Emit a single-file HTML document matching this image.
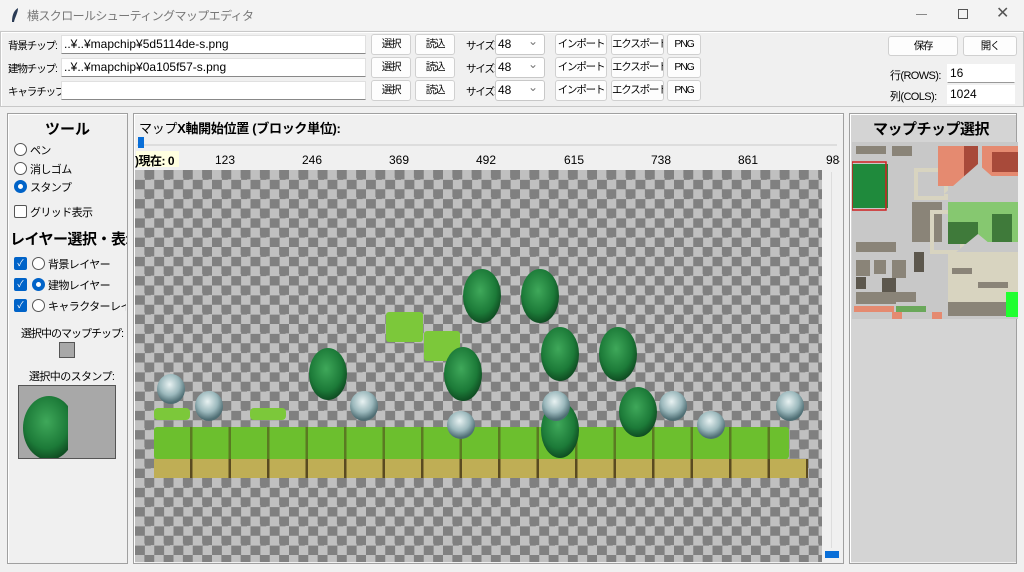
<!DOCTYPE html>
<html><head><meta charset="utf-8"><style>
*{box-sizing:border-box;margin:0;padding:0}
body{width:1024px;height:572px;background:#f0f0f0;font-family:"Liberation Sans","Noto Sans CJK JP",sans-serif;font-size:12px;color:#000;position:relative;overflow:hidden}
.a{position:absolute;white-space:nowrap}
.j{font-size:11px;letter-spacing:-0.6px}
.l{font-size:10.5px;letter-spacing:-1.1px}
.btn{position:absolute;background:#fdfdfd;border:1px solid #d0d0d0;border-radius:3px;text-align:center;font-size:10.5px;line-height:19px;height:21px;white-space:nowrap;overflow:hidden;letter-spacing:-1.2px}
.inp{position:absolute;background:#fff;border:1px solid #e0e0e0;border-bottom:1px solid #888;height:19px;font-size:12px;line-height:17px;padding-left:2px;white-space:nowrap}
.sel{position:absolute;background:#fff;border:1px solid #c8c8c8;border-radius:3px;height:21px;font-size:12px;line-height:19px;padding-left:2px}
.sel:after{content:"⌄";position:absolute;right:6px;top:-3px;color:#777;font-size:12px}
.panel{position:absolute;border:1px solid #a0a0a0;box-shadow:inset 1px 1px 0 #fff}
.rad{position:absolute;width:13px;height:13px;border:1px solid #555;border-radius:50%;background:#fff}
.rad.on{border:4px solid #0063c8}
.chk{position:absolute;width:13px;height:13px;border-radius:2px;background:#0063c8;color:#fff;font-size:9px;line-height:13px;text-align:center}
</style></head><body>
<div class="a" style="left:0;top:0;width:1024px;height:30px;background:#f3f3f3"></div>
<svg class="a" style="left:10px;top:7px" width="10" height="16"><path d="M8 1 C3 4 2 10 2 15 L4 15 C5 10 8 6 8 1Z" fill="#2a3b55"/></svg>
<div class="a j" style="left:27px;top:7px;color:#777;font-size:12px">横スクロールシューティングマップエディタ</div>
<div class="a" style="left:916px;top:14px;width:11px;height:1px;background:#888"></div>
<div class="a" style="left:958px;top:9px;width:10px;height:10px;border:1px solid #555"></div>
<div class="a" style="left:996px;top:3px;color:#555;font-size:16px">✕</div>
<div class="panel" style="left:0;top:31px;width:1024px;height:76px;border-color:#c8c8c8"></div>
<div class="a l" style="left:8px;top:38px">背景チップ:</div>
<div class="a l" style="left:8px;top:61px">建物チップ:</div>
<div class="a l" style="left:8px;top:84px">キャラチップ:</div>
<div class="inp" style="left:61px;top:35px;width:305px">..¥..¥mapchip¥5d5114de-s.png</div>
<div class="inp" style="left:61px;top:58px;width:305px">..¥..¥mapchip¥0a105f57-s.png</div>
<div class="inp" style="left:61px;top:81px;width:305px"></div>
<div class="btn" style="left:371px;top:34px;width:40px">選択</div>
<div class="btn" style="left:415px;top:34px;width:40px">読込</div>
<div class="btn" style="left:371px;top:57px;width:40px">選択</div>
<div class="btn" style="left:415px;top:57px;width:40px">読込</div>
<div class="btn" style="left:371px;top:80px;width:40px">選択</div>
<div class="btn" style="left:415px;top:80px;width:40px">読込</div>
<div class="a l" style="left:466px;top:38px">サイズ:</div>
<div class="a l" style="left:466px;top:61px">サイズ:</div>
<div class="a l" style="left:466px;top:84px">サイズ:</div>
<div class="sel" style="left:495px;top:34px;width:50px">48</div>
<div class="sel" style="left:495px;top:57px;width:50px">48</div>
<div class="sel" style="left:495px;top:80px;width:50px">48</div>
<div class="btn" style="left:555px;top:34px;width:52px">インポート</div>
<div class="btn" style="left:611px;top:34px;width:53px">エクスポート</div>
<div class="btn" style="left:667px;top:34px;width:34px">PNG</div>
<div class="btn" style="left:555px;top:57px;width:52px">インポート</div>
<div class="btn" style="left:611px;top:57px;width:53px">エクスポート</div>
<div class="btn" style="left:667px;top:57px;width:34px">PNG</div>
<div class="btn" style="left:555px;top:80px;width:52px">インポート</div>
<div class="btn" style="left:611px;top:80px;width:53px">エクスポート</div>
<div class="btn" style="left:667px;top:80px;width:34px">PNG</div>
<div class="btn" style="left:888px;top:36px;width:70px;height:20px">保存</div>
<div class="btn" style="left:963px;top:36px;width:54px;height:20px">開く</div>
<div class="a j" style="left:890px;top:67px">行(ROWS):</div>
<div class="a j" style="left:890px;top:88px">列(COLS):</div>
<div class="inp" style="left:947px;top:64px;width:68px;border-color:#fff #fff #999">16</div>
<div class="inp" style="left:947px;top:85px;width:68px;border-color:#fff">1024</div>
<div class="panel" style="left:7px;top:113px;width:121px;height:451px"></div>
<div class="a" style="left:45px;top:118px;font-size:15px;font-weight:bold">ツール</div>
<div class="rad" style="left:14px;top:143px"></div><div class="a j" style="left:30px;top:142px">ペン</div>
<div class="rad" style="left:14px;top:162px"></div><div class="a j" style="left:30px;top:161px">消しゴム</div>
<div class="rad on" style="left:14px;top:180px"></div><div class="a j" style="left:30px;top:179px">スタンプ</div>
<div class="a" style="left:14px;top:205px;width:13px;height:13px;border:1px solid #555;border-radius:2px;background:#fff"></div><div class="a j" style="left:30px;top:204px">グリッド表示</div>
<div class="a" style="left:10px;top:228px;font-size:15px;font-weight:bold;width:117px;overflow:hidden;letter-spacing:-0.5px">レイヤー選択・表示</div>
<div class="chk" style="left:14px;top:257px">✓</div><div class="rad" style="left:32px;top:257px"></div><div class="a j" style="left:48px;top:256px">背景レイヤー</div>
<div class="chk" style="left:14px;top:278px">✓</div><div class="rad on" style="left:32px;top:278px"></div><div class="a j" style="left:48px;top:277px">建物レイヤー</div>
<div class="chk" style="left:14px;top:299px">✓</div><div class="rad" style="left:32px;top:299px"></div><div class="a j" style="left:48px;top:298px;width:78px;overflow:hidden">キャラクターレイヤー</div>
<div class="a j" style="left:21px;top:325px;letter-spacing:-1px">選択中のマップチップ:</div>
<div class="a" style="left:59px;top:342px;width:16px;height:16px;background:#a8a8a8;border:1px solid #555"></div>
<div class="a j" style="left:29px;top:368px">選択中のスタンプ:</div>
<div class="a" style="left:18px;top:385px;width:98px;height:74px;background:#a8a8a8;border:1px solid #555;overflow:hidden">
<svg width="98" height="74"><defs><radialGradient id="tg" cx="45%" cy="40%" r="60%"><stop offset="0" stop-color="#3fa85a"/><stop offset=".7" stop-color="#1c7a38"/><stop offset="1" stop-color="#0f4d22"/></radialGradient></defs>
<clipPath id="c0"><rect x="0" y="0" width="49" height="74"/></clipPath><ellipse cx="30" cy="42" rx="26" ry="32" fill="url(#tg)" clip-path="url(#c0)"/></svg></div>
<div class="panel" style="left:133px;top:113px;width:711px;height:451px"></div>
<div class="a" style="left:139px;top:118px;font-size:13px;letter-spacing:-0.3px">マップ<b>X軸開始位置 (ブロック単位):</b></div>
<div class="a" style="left:137px;top:144px;width:700px;height:2px;background:#ddd"></div>
<div class="a" style="left:138px;top:137px;width:6px;height:11px;background:#0a6fd8"></div>
<div class="a" style="left:136px;top:151px;width:43px;height:16px;background:#ffffe0"></div>
<div class="a" style="left:135px;top:152px;font-weight:bold;letter-spacing:-0.5px">)現在: 0</div>
<div class="a" style="left:215px;top:153px">123</div>
<div class="a" style="left:302px;top:153px">246</div>
<div class="a" style="left:389px;top:153px">369</div>
<div class="a" style="left:476px;top:153px">492</div>
<div class="a" style="left:564px;top:153px">615</div>
<div class="a" style="left:651px;top:153px">738</div>
<div class="a" style="left:738px;top:153px">861</div>
<div class="a" style="left:826px;top:153px;width:14px;overflow:hidden">984</div>
<div class="a" style="left:135px;top:170px;width:687px;height:392px;background:repeating-conic-gradient(#808080 0 25%,#c0c0c0 0 50%) 0 0/19.25px 19.25px"></div>
<div class="a" style="left:823px;top:170px;width:18px;height:392px;background:#f0f0f0"></div>
<div class="a" style="left:831px;top:172px;width:1px;height:376px;background:#ddd"></div>
<div class="a" style="left:825px;top:551px;width:14px;height:7px;background:#0a6fd8"></div>
<svg class="a" style="left:0;top:0" width="1024" height="572">
<defs>
<radialGradient id="tr" cx="45%" cy="40%" r="60%"><stop offset="0" stop-color="#3fa85a"/><stop offset=".7" stop-color="#1c7a38"/><stop offset="1" stop-color="#0f4d22"/></radialGradient>
<radialGradient id="sn" cx="45%" cy="35%" r="60%"><stop offset="0" stop-color="#e8f2f2"/><stop offset=".6" stop-color="#9bb8bc"/><stop offset="1" stop-color="#4f6e74"/></radialGradient>
<pattern id="gp" width="38.5" height="40" patternUnits="userSpaceOnUse" x="154"><rect width="38.5" height="40" fill="#6cbf2e"/><rect x="36" width="2.5" height="40" fill="#5a7a22"/></pattern>
<pattern id="dp" width="38.5" height="20" patternUnits="userSpaceOnUse" x="154"><rect width="38.5" height="20" fill="#bfae55"/><rect x="36" width="2.5" height="20" fill="#5a4a20"/></pattern>
</defs>
<rect x="154" y="427" width="635" height="32" fill="url(#gp)" rx="3"/>
<rect x="154" y="459" width="654" height="19" fill="url(#dp)"/>
<rect x="154" y="408" width="36" height="12" fill="#7cc83a" rx="4"/>
<rect x="250" y="408" width="36" height="12" fill="#7cc83a" rx="4"/>
<rect x="386" y="312" width="37" height="30" fill="#7cc83a" rx="3"/>
<rect x="424" y="331" width="36" height="30" fill="#7cc83a" rx="3"/>
<g fill="url(#tr)">
<ellipse cx="482" cy="296" rx="19" ry="27"/>
<ellipse cx="540" cy="296" rx="19" ry="27"/>
<ellipse cx="328" cy="374" rx="19" ry="26"/>
<ellipse cx="463" cy="374" rx="19" ry="27"/>
<ellipse cx="560" cy="354" rx="19" ry="27"/>
<ellipse cx="618" cy="354" rx="19" ry="27"/>
<ellipse cx="560" cy="430" rx="19" ry="28"/>
<ellipse cx="638" cy="412" rx="19" ry="25"/>
</g>
<g fill="url(#sn)">
<ellipse cx="171" cy="389" rx="14" ry="15"/>
<ellipse cx="209" cy="406" rx="14" ry="15"/>
<ellipse cx="364" cy="406" rx="14" ry="15"/>
<ellipse cx="461" cy="425" rx="14" ry="14"/>
<ellipse cx="556" cy="406" rx="14" ry="15"/>
<ellipse cx="673" cy="406" rx="14" ry="15"/>
<ellipse cx="711" cy="425" rx="14" ry="14"/>
<ellipse cx="790" cy="406" rx="14" ry="15"/>
</g>
</svg>
<div class="panel" style="left:849px;top:113px;width:168px;height:451px"></div>
<div class="a" style="left:851px;top:115px;width:165px;height:447px;background:#d4d4d4"></div>
<div class="a" style="left:873px;top:118px;font-size:15px;font-weight:bold;letter-spacing:-0.5px">マップチップ選択</div>
<svg class="a" style="left:852px;top:142px" width="166" height="177">
<rect width="166" height="177" fill="#c8c8c8"/>
<g fill="#8a8478"><rect x="4" y="4" width="30" height="8"/><rect x="40" y="4" width="20" height="10"/><rect x="4" y="100" width="40" height="10"/><rect x="4" y="118" width="14" height="16"/><rect x="22" y="118" width="12" height="14"/><rect x="4" y="150" width="40" height="12"/><rect x="30" y="150" width="34" height="10"/><rect x="40" y="118" width="14" height="18"/><rect x="60" y="60" width="30" height="40"/></g>
<g fill="#5c574d"><rect x="30" y="136" width="14" height="14"/><rect x="4" y="135" width="10" height="12"/><rect x="62" y="110" width="10" height="20"/></g>
<rect x="64" y="28" width="30" height="28" fill="none" stroke="#d8d4c0" stroke-width="4"/><rect x="80" y="70" width="30" height="40" fill="none" stroke="#d8d4c0" stroke-width="4"/>
<rect x="0" y="22" width="36" height="44" fill="#1f8a3c"/>
<rect x="0" y="20" width="34" height="48" fill="none" stroke="#d02020" stroke-width="1.5"/>
<g fill="#e58a70"><rect x="86" y="4" width="40" height="40"/><rect x="130" y="4" width="36" height="30"/></g>
<g fill="#a84a3a"><rect x="112" y="4" width="14" height="36"/><rect x="140" y="10" width="26" height="20"/></g>
<rect x="96" y="60" width="70" height="40" fill="#86c870"/>
<g fill="#3f7a3a"><rect x="96" y="80" width="30" height="22"/><rect x="140" y="72" width="20" height="28"/></g>
<path d="M126 22 L160 52 L92 52Z" fill="#c8c8c8"/>
<path d="M126 92 L160 120 L92 120Z" fill="#c8c8c8"/>
<rect x="96" y="110" width="70" height="50" fill="#d8d4c0"/>
<g fill="#8a8478"><rect x="100" y="126" width="20" height="6"/><rect x="126" y="140" width="30" height="6"/><rect x="96" y="160" width="60" height="14"/></g>
<g fill="#e58a70"><rect x="2" y="164" width="40" height="6"/><rect x="40" y="170" width="10" height="7"/><rect x="80" y="170" width="10" height="7"/></g>
<rect x="44" y="164" width="30" height="6" fill="#6aa85a"/>
<rect x="154" y="150" width="12" height="25" fill="#20ff30"/>
</svg>
</body></html>
